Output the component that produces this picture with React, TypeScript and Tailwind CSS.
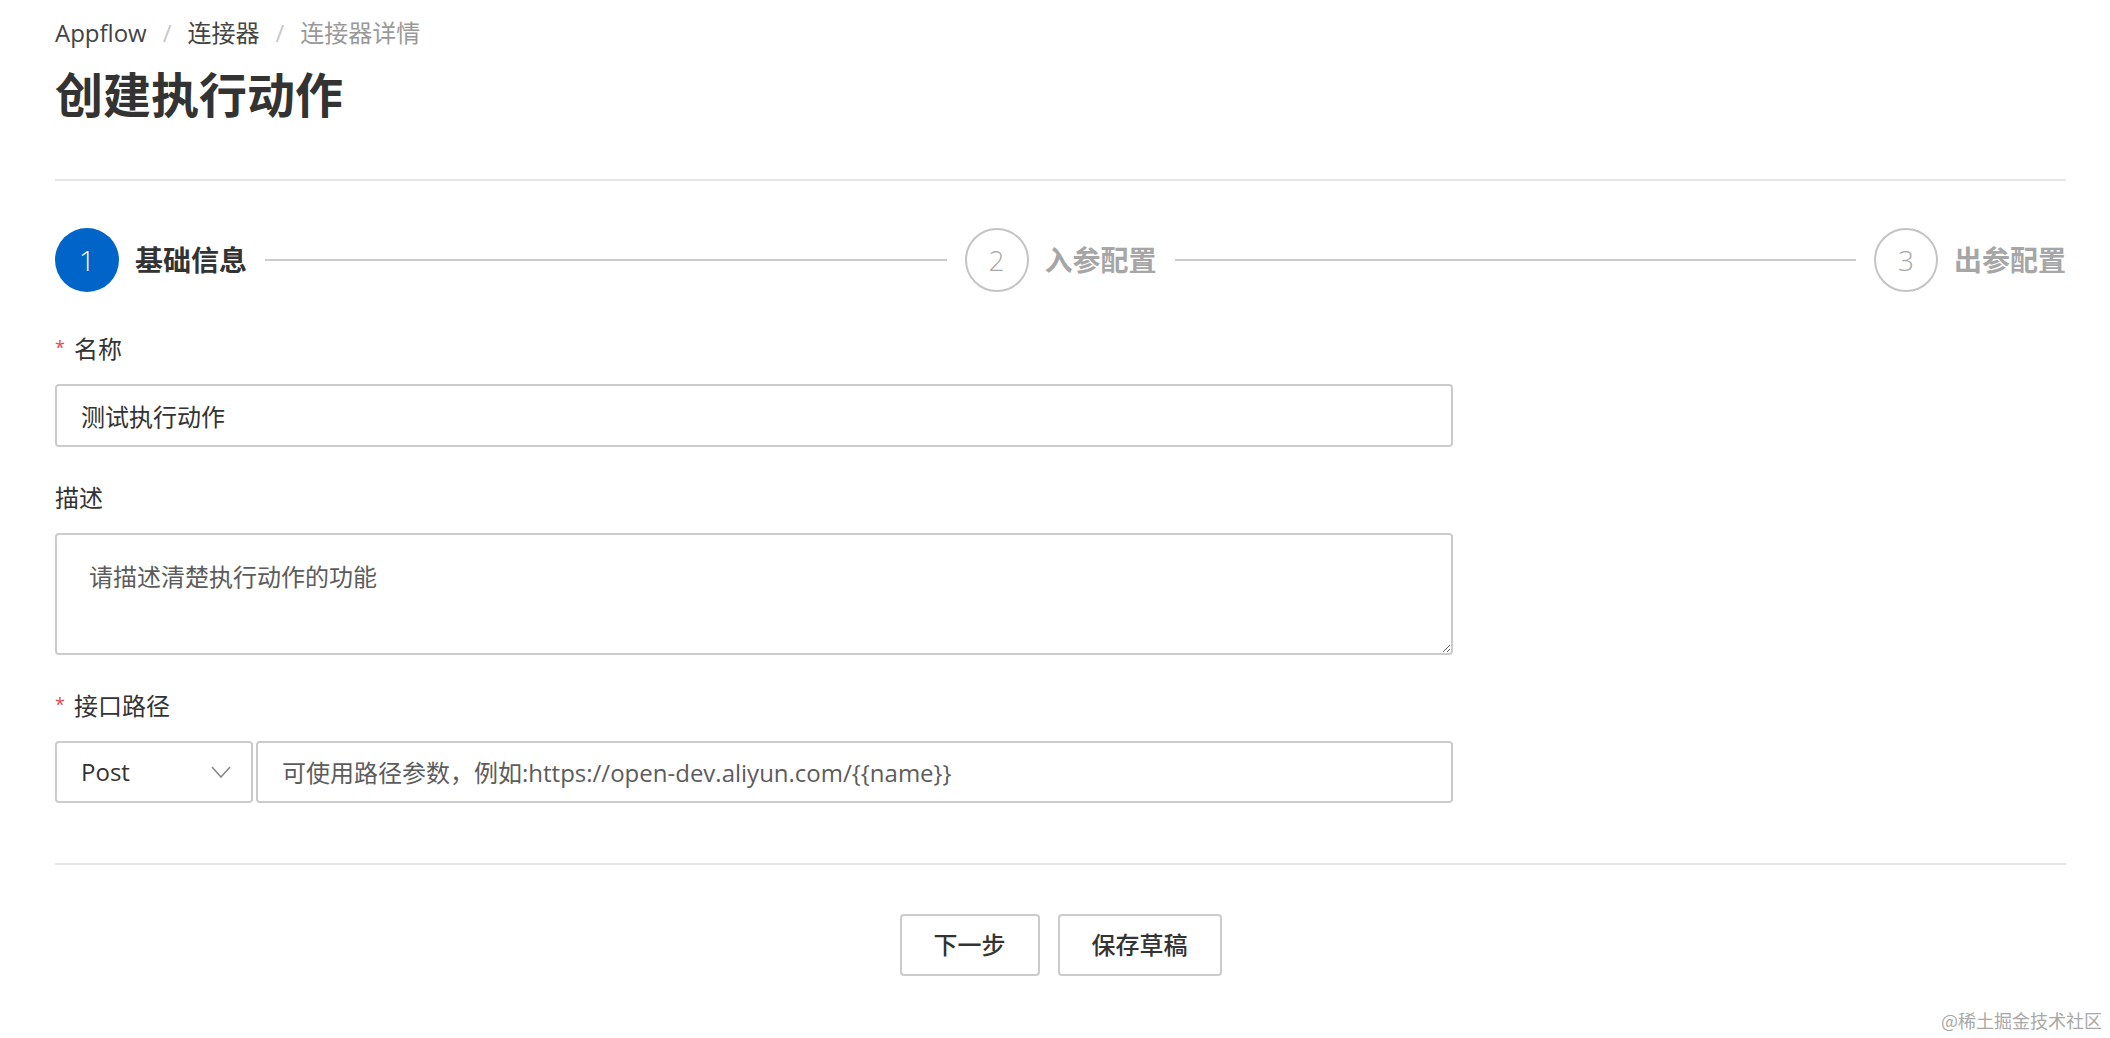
import React from "react";

const font = "font-['Open_Sans','Noto_Sans_CJK_SC',sans-serif]";

const Chevron: React.FC = () => (
  <svg width="20" height="12" viewBox="0 0 20 12" fill="none">
    <path d="M1 1 L10 11 L19 1" stroke="#8a8a8a" strokeWidth="1.6" />
  </svg>
);

type StepProps = { n: number; label: string; active?: boolean; last?: boolean };

const Step: React.FC<StepProps> = ({ n, label, active, last }) => (
  <div className={`flex items-center ${last ? "" : "flex-1"}`}>
    <div
      className={`w-[64px] h-[64px] rounded-full flex items-center justify-center text-[28px] font-light shrink-0 ${
        active
          ? "bg-[#0064c8] text-white"
          : "border-2 border-[#c4c4c4] text-[#a8a8a8]"
      }`}
    >
      {n}
    </div>
    <div
      className={`ml-[16px] text-[28px] font-bold whitespace-nowrap ${
        active ? "text-[#333]" : "text-[#a6a6a6]"
      }`}
    >
      {label}
    </div>
    {!last && <div className="flex-1 h-[2px] bg-[#cccccc] mx-[18px]" />}
  </div>
);

const Label: React.FC<{ text: string; required?: boolean }> = ({ text, required }) => (
  <div className="h-[32px] flex items-center text-[24px] text-[#333] leading-[32px]">
    {required && <span className="text-[#e5484d] text-[18px] mr-[9px] -mt-[4px]">*</span>}
    {text}
  </div>
);

export default function App() {
  return (
    <div className={`relative w-[2110px] h-[1038px] bg-white ${font} text-[#333]`}>
      <div className="pl-[55px] pr-[44px] pt-[17px]">
        {/* breadcrumb */}
        <div className="flex items-center h-[32px] text-[24px] leading-[32px]">
          <span className="text-[#444]">Appflow</span>
          <span className="text-[#c8c8c8] mx-[16px]">/</span>
          <span className="text-[#444]">连接器</span>
          <span className="text-[#c8c8c8] mx-[16px]">/</span>
          <span className="text-[#999]">连接器详情</span>
        </div>

        <h1 className="mt-[18px] h-[56px] leading-[56px] text-[48px] font-bold text-[#333]">
          创建执行动作
        </h1>

        <div className="mt-[56px] h-[2px] bg-[#e6e6e6]" />

        {/* steps */}
        <div className="mt-[47px] flex items-center h-[64px]">
          <Step n={1} label="基础信息" active />
          <Step n={2} label="入参配置" />
          <Step n={3} label="出参配置" last />
        </div>

        {/* form */}
        <div className="w-[1398px]">
          <div className="mt-[41px]">
            <Label text="名称" required />
          </div>
          <input
            defaultValue="测试执行动作"
            className="mt-[19px] block w-full h-[63px] border-2 border-[#cbcbcb] rounded-[4px] px-[24px] text-[24px] text-[#333] outline-none"
          />

          <div className="mt-[35px]">
            <Label text="描述" />
          </div>
          <textarea
            placeholder="请描述清楚执行动作的功能"
            className="mt-[19px] block w-full h-[122px] border-2 border-[#cbcbcb] rounded-[4px] px-[32px] pt-[26px] text-[24px] leading-[32px] text-[#333] placeholder:text-[#5c5c5c] outline-none"
          />

          <div className="mt-[35px]">
            <Label text="接口路径" required />
          </div>
          <div className="mt-[19px] flex h-[62px] gap-[3px]">
            <div className="w-[198px] h-full border-2 border-[#cbcbcb] rounded-[4px] flex items-center justify-between pl-[24px] pr-[20px] text-[24px] text-[#333]">
              <span>Post</span>
              <Chevron />
            </div>
            <input
              placeholder="可使用路径参数，例如:https://open-dev.aliyun.com/{{name}}"
              className="flex-1 h-full border-2 border-[#cbcbcb] rounded-[4px] px-[24px] text-[24px] text-[#333] placeholder:text-[#5c5c5c] outline-none"
            />
          </div>
        </div>

        <div className="mt-[60px] h-[2px] bg-[#e6e6e6]" />

        {/* actions */}
        <div className="mt-[49px] flex justify-center gap-[18px]">
          <button className="w-[140px] h-[62px] border-2 border-[#cbcbcb] rounded-[4px] bg-white text-[24px] font-medium text-[#333]">
            下一步
          </button>
          <button className="w-[164px] h-[62px] border-2 border-[#cbcbcb] rounded-[4px] bg-white text-[24px] font-medium text-[#333]">
            保存草稿
          </button>
        </div>
      </div>

      <div className="absolute right-[8px] bottom-[4px] text-[18px] text-[#a8a8a8] font-['Noto_Sans_CJK_SC',sans-serif]">
        @稀土掘金技术社区
      </div>
    </div>
  );
}
